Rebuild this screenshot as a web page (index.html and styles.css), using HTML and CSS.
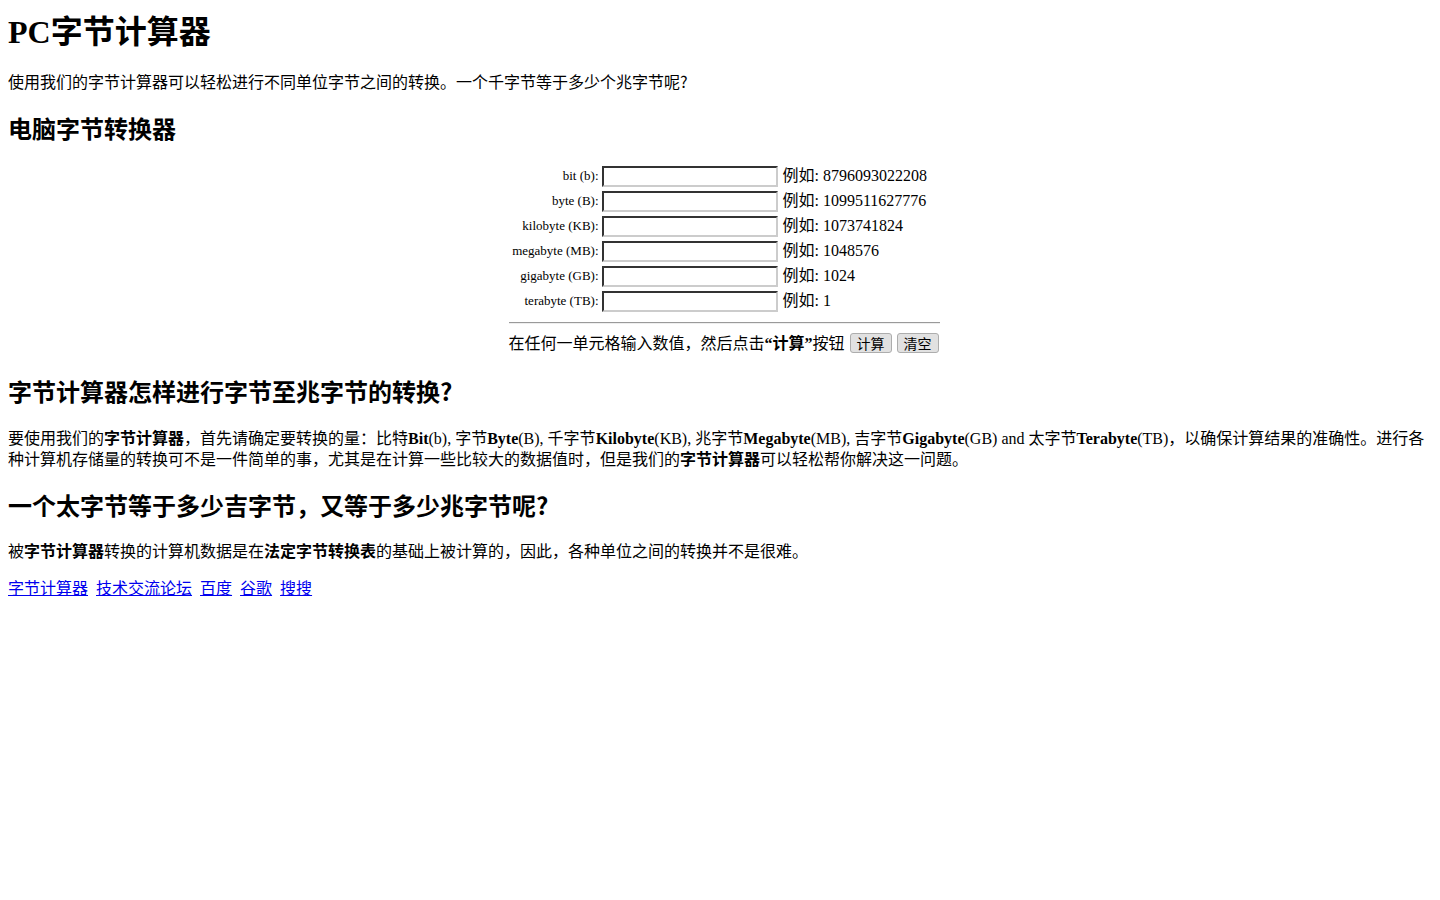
FILE: index.html
```html
<!DOCTYPE html>
<html lang="zh-CN">
<head>
<meta charset="utf-8">
<title>PC字节计算器</title>
<link rel="stylesheet" href="styles.css">
</head>
<body>
<h1 class="title">PC字节计算器</h1>
<p class="intro">使用我们的字节计算器可以轻松进行不同单位字节之间的转换。一个千字节等于多少个兆字节呢<span class="q">?</span></p>
<h2 class="sub">电脑字节转换器</h2>
<form class="calc">
<table class="calc-table">
<tr><td class="lbl">bit (b):</td><td class="fld"><input class="inp" type="text"></td><td class="ex">例如: 8796093022208</td></tr>
<tr><td class="lbl">byte (B):</td><td class="fld"><input class="inp" type="text"></td><td class="ex">例如: 1099511627776</td></tr>
<tr><td class="lbl">kilobyte (KB):</td><td class="fld"><input class="inp" type="text"></td><td class="ex">例如: 1073741824</td></tr>
<tr><td class="lbl">megabyte (MB):</td><td class="fld"><input class="inp" type="text"></td><td class="ex">例如: 1048576</td></tr>
<tr><td class="lbl">gigabyte (GB):</td><td class="fld"><input class="inp" type="text"></td><td class="ex">例如: 1024</td></tr>
<tr><td class="lbl">terabyte (TB):</td><td class="fld"><input class="inp" type="text"></td><td class="ex">例如: 1</td></tr>
<tr><td class="rule-cell" colspan="3"><hr class="rule"></td></tr>
<tr><td class="foot" colspan="3">在任何一单元格输入数值，然后点击<b>“计算”</b>按钮 <button type="button" class="btn">计算</button> <button type="reset" class="btn">清空</button></td></tr>
</table>
</form>
<h2 class="sub">字节计算器怎样进行字节至兆字节的转换<span class="q">?</span></h2>
<p class="text">要使用我们的<b>字节计算器</b>，首先请确定要转换的量：比特<b>Bit</b>(b), 字节<b>Byte</b>(B), 千字节<b>Kilobyte</b>(KB), 兆字节<b>Megabyte</b>(MB), 吉字节<b>Gigabyte</b>(GB) and 太字节<b>Terabyte</b>(TB)，以确保计算结果的准确性。进行各种计算机存储量的转换可不是一件简单的事，尤其是在计算一些比较大的数据值时，但是我们的<b>字节计算器</b>可以轻松帮你解决这一问题。</p>
<h2 class="sub">一个太字节等于多少吉字节，又等于多少兆字节呢<span class="q">?</span></h2>
<p class="text">被<b>字节计算器</b>转换的计算机数据是在<b>法定字节转换表</b>的基础上被计算的，因此，各种单位之间的转换并不是很难。</p>
<p class="links"><a href="#">字节计算器</a>&nbsp; <a href="#">技术交流论坛</a>&nbsp; <a href="#">百度</a>&nbsp; <a href="#">谷歌</a>&nbsp; <a href="#">搜搜</a></p>
</body>
</html>
```

FILE: styles.css
```css
body {
  margin: 8px;
  font-family: "Liberation Serif", "Noto Sans CJK SC", serif;
  font-size: 16px;
  color: #000;
  background: #fff;
}
.title {
  font-size: 32px;
  margin: 0 0 16px;
  line-height: 1.5;
}
.intro, .text, .links {
  margin: 16px 0;
  line-height: 21px;
}
.sub {
  font-size: 24px;
  margin: 23px 0 20px;
  line-height: 1.2;
}
.q {
  font-family: "Noto Sans CJK SC", sans-serif;
  line-height: 0;
}
.calc {
  margin: 0;
  padding: 0 0 1px 8px;
}
.calc-table {
  margin: -1px auto 0;
  border-collapse: separate;
  border-spacing: 0;
}
.calc-table td {
  padding: 2px 0;
  vertical-align: middle;
}
.calc-table .rule-cell,
.calc-table .foot {
  padding: 1px 0;
}
.lbl {
  width: 90px;
  padding-right: 2px !important;
  text-align: right;
  font-size: 13px;
  white-space: nowrap;
  line-height: 20px;
}
.fld {
  padding-left: 1px !important;
  padding-right: 2px !important;
}
.inp {
  box-sizing: border-box;
  width: 176px;
  height: 21px;
  margin: 0;
  padding: 1px 2px;
  border-style: solid;
  border-width: 2px;
  border-color: #333 #ccc #ccc #333;
  background: #fff;
  font-size: 13px;
  display: block;
}
.ex {
  width: 157px;
  padding-left: 3px !important;
  white-space: nowrap;
  line-height: 20px;
}
.rule {
  margin: 7px 0 4px;
  height: 0;
  border: 0;
  border-top: 1px solid #9a9a9a;
  border-bottom: 1px solid #eeeeee;
}
.foot {
  white-space: nowrap;
}
.btn {
  font-family: "Noto Sans CJK SC", sans-serif;
  font-size: 14px;
  line-height: 18px;
  padding: 0 6px;
  margin-left: 1px;
  border: 1px solid #adadad;
  border-radius: 3px;
  background: #e1e1e1;
  color: #000;
}
a {
  color: #0000ee;
}
```
